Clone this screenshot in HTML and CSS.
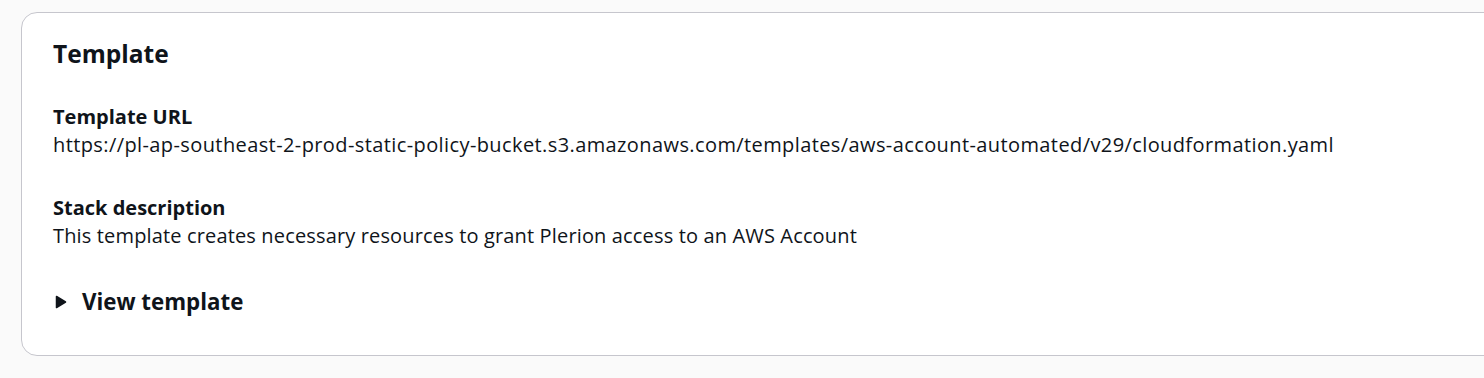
FILE: index.html
```html
<!DOCTYPE html>
<html lang="en">
<head>
<meta charset="utf-8">
<title>Template</title>
<link rel="stylesheet" href="styles.css">
</head>
<body>
<div class="page">
  <section class="card">
    <h2 class="card-title">Template</h2>
    <div class="kv">
      <div class="kv-item">
        <div class="kv-label">Template URL</div>
        <div class="kv-value kv-value-url">https://pl-ap-southeast-2-prod-static-policy-bucket.s3.amazonaws.com/templates/aws-account-automated/v29/cloudformation.yaml</div>
      </div>
      <div class="kv-item">
        <div class="kv-label">Stack description</div>
        <div class="kv-value">This template creates necessary resources to grant Plerion access to an AWS Account</div>
      </div>
    </div>
    <div class="expander">
      <svg class="caret" width="12" height="14" viewBox="0 0 12 14" aria-hidden="true"><path d="M1.5 1.5 L10.5 7 L1.5 12.5 Z" fill="#0f141a" stroke="#0f141a" stroke-width="1.5" stroke-linejoin="round"/></svg>
      <span class="expander-label">View template</span>
    </div>
  </section>
</div>
</body>
</html>
```

FILE: styles.css
```css
html, body {
  margin: 0;
  padding: 0;
  background: #fafafa;
  overflow: hidden;
}
.page {
  padding: 12px 0 0 21px;
  font-family: "Open Sans", "Noto Sans", Arial, sans-serif;
  color: #0f141a;
}
.card {
  box-sizing: border-box;
  width: 1500px;
  height: 344px;
  background: #ffffff;
  border: 1px solid #c6c6cd;
  border-radius: 16px;
  padding: 25px 31px 0 31px;
}
.card-title {
  margin: 0;
  font-size: 24.5px;
  line-height: 32px;
  font-weight: 700;
}
.kv {
  margin-top: 33px;
  display: flex;
  flex-direction: column;
  gap: 35px;
}
.kv-label {
  font-size: 20px;
  line-height: 28px;
  font-weight: 700;
}
.kv-value {
  font-size: 20px;
  line-height: 28px;
  letter-spacing: 0.15px;
}
.kv-value-url {
  letter-spacing: 0.4px;
}
.expander {
  margin-top: 38px;
  display: flex;
  align-items: center;
  gap: 15px;
  height: 28px;
  padding-left: 2px;
}
.caret {
  display: block;
}
.expander-label {
  font-size: 22.3px;
  line-height: 28px;
  font-weight: 700;
}
```
